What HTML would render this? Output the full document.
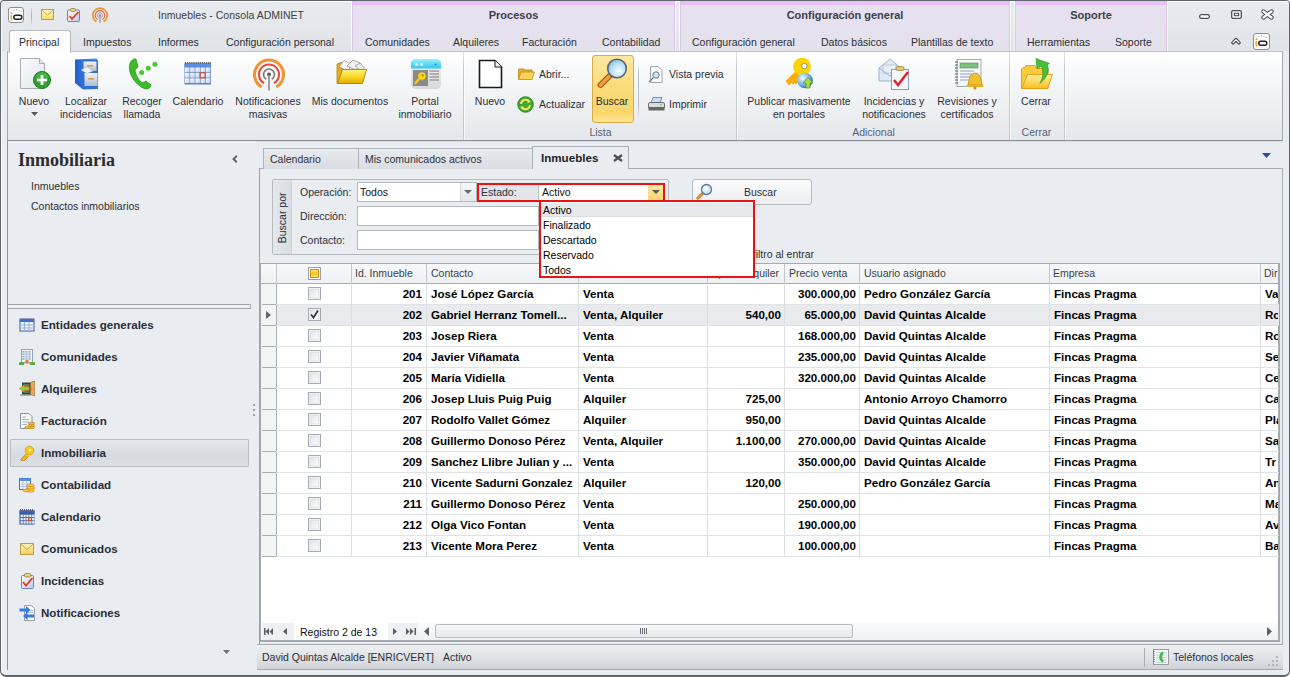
<!DOCTYPE html><html><head><meta charset="utf-8"><style>
*{margin:0;padding:0;box-sizing:border-box}
html,body{width:1290px;height:677px;overflow:hidden;background:#fff}
body{font-family:"Liberation Sans",sans-serif;font-size:11px;color:#1e2b3d;position:relative}
.a{position:absolute}
.t{position:absolute;white-space:nowrap;line-height:1}
</style></head><body>
<div class="a" style="left:0px;top:0px;width:1290px;height:677px;background:#e9ecf0;border:1px solid #60656c;border-bottom-width:2px;border-radius:4px 4px 6px 6px"></div>
<div class="a" style="left:1px;top:6px;width:1px;height:664px;background:#fbfcfd"></div>
<div class="a" style="left:2px;top:1px;width:1287px;height:50px;background:linear-gradient(#e8ebef,#e0e4e9);border-radius:3px 3px 0 0;border-top:1px solid #fff"></div>
<div class="a" style="left:351px;top:1px;width:1px;height:50px;background:linear-gradient(#fff,#f4f5f7)"></div>
<div class="a" style="left:675px;top:1px;width:1px;height:50px;background:linear-gradient(#fff,#f4f5f7)"></div>
<div class="a" style="left:352px;top:1px;width:323px;height:50px;background:linear-gradient(#e8e0f1,#e6e0ef 45%,#e3e2ea);border-top:4px solid #e7c2f9;border-left:1px solid #dcc3ea;border-right:1px solid #dcc3ea"></div>
<div class="t" style="left:363.5px;width:300px;text-align:center;top:9.69px;font-size:11px;color:#3a3e46;font-weight:bold;">Procesos</div>
<div class="a" style="left:679px;top:1px;width:1px;height:50px;background:linear-gradient(#fff,#f4f5f7)"></div>
<div class="a" style="left:1010px;top:1px;width:1px;height:50px;background:linear-gradient(#fff,#f4f5f7)"></div>
<div class="a" style="left:680px;top:1px;width:330px;height:50px;background:linear-gradient(#e8e0f1,#e6e0ef 45%,#e3e2ea);border-top:4px solid #e7c2f9;border-left:1px solid #dcc3ea;border-right:1px solid #dcc3ea"></div>
<div class="t" style="left:695.0px;width:300px;text-align:center;top:9.69px;font-size:11px;color:#3a3e46;font-weight:bold;">Configuración general</div>
<div class="a" style="left:1014px;top:1px;width:1px;height:50px;background:linear-gradient(#fff,#f4f5f7)"></div>
<div class="a" style="left:1167px;top:1px;width:1px;height:50px;background:linear-gradient(#fff,#f4f5f7)"></div>
<div class="a" style="left:1015px;top:1px;width:152px;height:50px;background:linear-gradient(#e8e0f1,#e6e0ef 45%,#e3e2ea);border-top:4px solid #e7c2f9;border-left:1px solid #dcc3ea;border-right:1px solid #dcc3ea"></div>
<div class="t" style="left:941.0px;width:300px;text-align:center;top:9.69px;font-size:11px;color:#3a3e46;font-weight:bold;">Soporte</div>
<div class="t" style="left:158px;top:10.11px;font-size:10.5px;color:#3a3e46;">Inmuebles - Consola ADMINET</div>
<svg class="a" style="left:8px;top:7px" width="16" height="16" viewBox="0 0 16 16"><rect x="0.5" y="0.5" width="15" height="15" rx="2.5" fill="#fbfbfb" stroke="#8b8f95"/><path d="M3.3 8 Q2.5 11 4 13.5" stroke="#f0a020" stroke-width="1.4" fill="none"/><circle cx="3.5" cy="6.3" r="1" fill="#f0a020"/><rect x="5.8" y="8.2" width="8" height="4" rx="2" fill="none" stroke="#222" stroke-width="1.5"/><circle cx="6" cy="3.6" r=".5" fill="#888"/><circle cx="8.5" cy="2.8" r=".5" fill="#888"/><circle cx="11" cy="3.3" r=".5" fill="#888"/><circle cx="13" cy="4.6" r=".5" fill="#888"/></svg>
<div class="a" style="left:31px;top:7px;width:1px;height:18px;background:linear-gradient(#e0e3e7,#a9aeb5,#e0e3e7)"></div>
<svg class="a" style="left:41px;top:9px" width="13" height="11" viewBox="0 0 13 11"><defs><linearGradient id="ml" x1="0" y1="0" x2="0" y2="1"><stop offset="0" stop-color="#fff6c8"/><stop offset="1" stop-color="#f3d870"/></linearGradient></defs><rect x="0.5" y="0.5" width="12" height="10" fill="url(#ml)" stroke="#b8953a" stroke-width=".9"/><path d="M0.5 0.8 L6.5 6 L12.5 0.8" fill="none" stroke="#c9a640" stroke-width=".9"/></svg>
<svg class="a" style="left:67px;top:8px" width="13" height="14" viewBox="0 0 13 14"><defs><linearGradient id="clb" x1="0" y1="0" x2="1" y2="1"><stop offset="0" stop-color="#ffffff"/><stop offset="1" stop-color="#b9c9e6"/></linearGradient></defs><rect x="0.5" y="2" width="12" height="11.5" rx="1" fill="url(#clb)" stroke="#5a7ab0" stroke-width=".9"/><rect x="3.5" y="0.5" width="5" height="3" rx="1" fill="#e6cf7a" stroke="#9c8440" stroke-width=".8"/><path d="M2.5 8 L5 11 L11.5 4" fill="none" stroke="#e23a1a" stroke-width="1.8"/></svg>
<svg class="a" style="left:92px;top:7px" width="17" height="16" viewBox="0 0 17 16"><path d="M4.4 14.64 A7.2 7.2 0 1 1 11.6 14.64" fill="none" stroke="#f3922e" stroke-width="1.8"/><path d="M5.6 12.56 A4.8 4.8 0 1 1 10.4 12.56" fill="none" stroke="#e8604a" stroke-width="1.1"/><path d="M6.75 10.57 A2.5 2.5 0 1 1 9.25 10.57" fill="none" stroke="#9a9a9a" stroke-width="1"/><circle cx="8" cy="8.4" r="1" fill="#666"/><rect x="7.3" y="8.4" width="1.4" height="7.6" fill="#a0a0a0"/></svg>
<svg class="a" style="left:1199px;top:14px" width="11" height="5" viewBox="0 0 11 5"><rect x="0.7" y="0.7" width="9.6" height="3.6" rx="1.5" fill="#fff" stroke="#4a4f57" stroke-width="1.3"/></svg>
<svg class="a" style="left:1231px;top:10px" width="11" height="9" viewBox="0 0 11 9"><rect x="0.7" y="0.7" width="9.6" height="7.6" rx="1.3" fill="#fff" stroke="#4a4f57" stroke-width="1.3"/><rect x="3.3" y="3.3" width="4.4" height="2.4" fill="none" stroke="#4a4f57" stroke-width="1.1"/></svg>
<svg class="a" style="left:1261px;top:9px" width="13" height="11" viewBox="0 0 13 11"><path d="M2.5 2.5 L10.5 8.5 M10.5 2.5 L2.5 8.5" stroke="#4a4f57" stroke-width="4.4" stroke-linecap="round"/><path d="M2.5 2.5 L10.5 8.5 M10.5 2.5 L2.5 8.5" stroke="#fff" stroke-width="2.2" stroke-linecap="round"/></svg>
<svg class="a" style="left:1231px;top:37px" width="10" height="8" viewBox="0 0 10 8"><path d="M2 5.8 L5 2.6 L8 5.8" fill="none" stroke="#333" stroke-width="3.4" stroke-linejoin="round" stroke-linecap="round"/><path d="M2 5.8 L5 2.6 L8 5.8" fill="none" stroke="#fff" stroke-width="1.3" stroke-linecap="round"/></svg>
<svg class="a" style="left:1253px;top:33px" width="17" height="17" viewBox="0 0 17 17"><rect x="0.5" y="0.5" width="16" height="16" rx="2.5" fill="#fbfbfb" stroke="#8b8f95"/><path d="M3.3 8 Q2.5 11 4 13.5" stroke="#f0a020" stroke-width="1.4" fill="none"/><circle cx="3.5" cy="6.3" r="1" fill="#f0a020"/><rect x="5.8" y="8.2" width="8" height="4" rx="2" fill="none" stroke="#222" stroke-width="1.5"/><circle cx="6" cy="3.6" r=".5" fill="#888"/><circle cx="8.5" cy="2.8" r=".5" fill="#888"/><circle cx="11" cy="3.3" r=".5" fill="#888"/><circle cx="13" cy="4.6" r=".5" fill="#888"/></svg>
<div class="a" style="left:7px;top:51px;width:1276px;height:90px;background:linear-gradient(#ffffff,#f5f6f8 35%,#e4e7eb);border:1px solid #a4a9b0;border-top-color:#bfc4ca;border-bottom-color:#8a8f96"></div>
<div class="a" style="left:8px;top:141px;width:1274px;height:2px;background:linear-gradient(#d8dce1,#e9ecf0)"></div>
<div class="a" style="left:9px;top:30px;width:62px;height:23px;background:linear-gradient(#fcfcfd,#fdfdfe);border:1px solid #b3b8bf;border-bottom:none;border-radius:3px 3px 0 0"></div>
<div class="t" style="left:19px;top:37.11px;font-size:10.5px;color:#2b2f38;">Principal</div>
<div class="t" style="left:83px;top:37.11px;font-size:10.5px;color:#2b2f38;">Impuestos</div>
<div class="t" style="left:158px;top:37.11px;font-size:10.5px;color:#2b2f38;">Informes</div>
<div class="t" style="left:226px;top:37.11px;font-size:10.5px;color:#2b2f38;">Configuración personal</div>
<div class="t" style="left:365px;top:37.11px;font-size:10.5px;color:#2b2f38;">Comunidades</div>
<div class="t" style="left:453px;top:37.11px;font-size:10.5px;color:#2b2f38;">Alquileres</div>
<div class="t" style="left:522px;top:37.11px;font-size:10.5px;color:#2b2f38;">Facturación</div>
<div class="t" style="left:602px;top:37.11px;font-size:10.5px;color:#2b2f38;">Contabilidad</div>
<div class="t" style="left:692px;top:37.11px;font-size:10.5px;color:#2b2f38;">Configuración general</div>
<div class="t" style="left:821px;top:37.11px;font-size:10.5px;color:#2b2f38;">Datos básicos</div>
<div class="t" style="left:911px;top:37.11px;font-size:10.5px;color:#2b2f38;">Plantillas de texto</div>
<div class="t" style="left:1027px;top:37.11px;font-size:10.5px;color:#2b2f38;">Herramientas</div>
<div class="t" style="left:1115px;top:37.11px;font-size:10.5px;color:#2b2f38;">Soporte</div>
<div class="a" style="left:463px;top:52px;width:1px;height:88px;background:linear-gradient(#dde0e4,#c6cbd1 20%,#c3c8ce)"></div>
<div class="a" style="left:464px;top:52px;width:1px;height:88px;background:rgba(255,255,255,.7)"></div>
<div class="a" style="left:736px;top:52px;width:1px;height:88px;background:linear-gradient(#dde0e4,#c6cbd1 20%,#c3c8ce)"></div>
<div class="a" style="left:737px;top:52px;width:1px;height:88px;background:rgba(255,255,255,.7)"></div>
<div class="a" style="left:1009px;top:52px;width:1px;height:88px;background:linear-gradient(#dde0e4,#c6cbd1 20%,#c3c8ce)"></div>
<div class="a" style="left:1010px;top:52px;width:1px;height:88px;background:rgba(255,255,255,.7)"></div>
<div class="a" style="left:1064px;top:52px;width:1px;height:88px;background:linear-gradient(#dde0e4,#c6cbd1 20%,#c3c8ce)"></div>
<div class="a" style="left:1065px;top:52px;width:1px;height:88px;background:rgba(255,255,255,.7)"></div>
<div class="a" style="left:638px;top:62px;width:1px;height:56px;background:linear-gradient(rgba(190,195,202,0),#b9bec5 20%,#b9bec5 80%,rgba(190,195,202,0))"></div>
<svg class="a" style="left:20px;top:58px" width="31" height="32" viewBox="0 0 31 32"><defs><linearGradient id="pg" x1="0" y1="0" x2="1" y2="1"><stop offset="0" stop-color="#fafbfd"/><stop offset="1" stop-color="#dfe3ea"/></linearGradient></defs><path d="M0.5 0.5 H19.5 L24.5 5.5 V30.5 H0.5 Z" fill="url(#pg)" stroke="#a9adb4"/><path d="M19.5 0.5 V5.5 H24.5" fill="#e6e8ec" stroke="#a9adb4"/><circle cx="22" cy="22" r="8.5" fill="#2f9e2f" stroke="#1f7a1f"/><circle cx="22" cy="20" r="6" fill="#52c152" opacity=".6"/><path d="M22 17 V27 M17 22 H27" stroke="#fff" stroke-width="2.6"/></svg>
<div class="t" style="left:-116px;width:300px;text-align:center;top:96.11px;font-size:10.5px;color:#2b2f38;">Nuevo</div>
<svg class="a" style="left:31px;top:112px" width="7" height="4" viewBox="0 0 7 4"><path d="M0 0 H7 L3.5 4 Z" fill="#555a62"/></svg>
<svg class="a" style="left:74px;top:58px" width="25" height="32" viewBox="0 0 25 32"><defs><linearGradient id="cab" x1="0" y1="0" x2="1" y2="0"><stop offset="0" stop-color="#1f5fcf"/><stop offset="1" stop-color="#4f95ec"/></linearGradient><linearGradient id="drw" x1="0" y1="0" x2="0" y2="1"><stop offset="0" stop-color="#f4f6fa"/><stop offset="1" stop-color="#aebbd2"/></linearGradient></defs><path d="M1 1.5 L23 0.5 V31 L9 31.5 L1 25 Z" fill="url(#cab)"/><path d="M9 2 H24 V31 H9 Z" fill="#2f6fd8"/><rect x="9.5" y="3.5" width="13" height="9.5" fill="url(#drw)"/><rect x="10.5" y="15" width="13" height="13" fill="url(#drw)"/><rect x="13" y="7" width="6" height="1.8" rx=".8" fill="#d9a04a"/><rect x="14" y="20" width="6" height="1.8" rx=".8" fill="#d9a04a"/><path d="M7 12 L13 9 L19 13 L13 15.5 Z" fill="#eef4fc" stroke="#9fb8d8" stroke-width=".5"/></svg>
<div class="t" style="left:-64px;width:300px;text-align:center;top:96.11px;font-size:10.5px;color:#2b2f38;">Localizar</div>
<div class="t" style="left:-64px;width:300px;text-align:center;top:109.11px;font-size:10.5px;color:#2b2f38;">incidencias</div>
<svg class="a" style="left:128px;top:58px" width="30" height="32" viewBox="0 0 30 32"><path d="M6 1 C1 3 0 10 3 17 C6 24 13 30 18 31 C21 31 23 29 23 27 L18 23 C16 24 15 25 13 24 C10 21 8 17 7 13 C7 11 9 10 10 9 L8 1 Z" fill="#3fba2a" stroke="#2a9a1c" stroke-width=".8"/><circle cx="13.7" cy="14.4" r="2.5" fill="#4cc438"/><circle cx="20.3" cy="10.2" r="2.5" fill="#4cc438"/><circle cx="26.9" cy="6.3" r="2.5" fill="#4cc438"/></svg>
<div class="t" style="left:-8px;width:300px;text-align:center;top:96.11px;font-size:10.5px;color:#2b2f38;">Recoger</div>
<div class="t" style="left:-8px;width:300px;text-align:center;top:109.11px;font-size:10.5px;color:#2b2f38;">llamada</div>
<svg class="a" style="left:184px;top:62px" width="28" height="23" viewBox="0 0 28 23"><defs><linearGradient id="cel" x1="0" y1="0" x2="1" y2="1"><stop offset="0" stop-color="#ffffff"/><stop offset="1" stop-color="#b8cdf0"/></linearGradient></defs><rect x="0.5" y="1.5" width="26.5" height="21" fill="#5a7fb8"/><rect x="0.5" y="1.5" width="26.5" height="3.5" fill="#5b8ee0"/><rect x="1.0" y="5.5" width="4.6" height="4.8" fill="url(#cel)"/><rect x="6.2" y="5.5" width="4.6" height="4.8" fill="url(#cel)"/><rect x="11.4" y="5.5" width="4.6" height="4.8" fill="url(#cel)"/><rect x="16.6" y="5.5" width="4.6" height="4.8" fill="url(#cel)"/><rect x="21.8" y="5.5" width="4.6" height="4.8" fill="url(#cel)"/><rect x="1.0" y="10.9" width="4.6" height="4.8" fill="url(#cel)"/><rect x="6.2" y="10.9" width="4.6" height="4.8" fill="url(#cel)"/><rect x="11.4" y="10.9" width="4.6" height="4.8" fill="url(#cel)"/><rect x="16.6" y="10.9" width="4.6" height="4.8" fill="url(#cel)"/><rect x="21.8" y="10.9" width="4.6" height="4.8" fill="url(#cel)"/><rect x="1.0" y="16.3" width="4.6" height="4.8" fill="url(#cel)"/><rect x="6.2" y="16.3" width="4.6" height="4.8" fill="url(#cel)"/><rect x="11.4" y="16.3" width="4.6" height="4.8" fill="url(#cel)"/><rect x="16.6" y="16.3" width="4.6" height="4.8" fill="url(#cel)"/><rect x="21.8" y="16.3" width="4.6" height="4.8" fill="url(#cel)"/><path d="M1 0.8 H27" stroke="#222" stroke-width="1.2" stroke-dasharray="1.2 0.9"/><rect x="16" y="10.8" width="5.2" height="5" fill="none" stroke="#e0401a" stroke-width="1.1"/></svg>
<div class="t" style="left:48px;width:300px;text-align:center;top:96.11px;font-size:10.5px;color:#2b2f38;">Calendario</div>
<svg class="a" style="left:252px;top:58px" width="34" height="33" viewBox="0 0 34 33"><path d="M9.75 29.06 A14.5 14.5 0 1 1 24.25 29.06" fill="none" stroke="#f3922e" stroke-width="3"/><path d="M12 25.16 A10 10 0 1 1 22 25.16" fill="none" stroke="#e5483a" stroke-width="2"/><path d="M14.25 21.26 A5.5 5.5 0 1 1 19.75 21.26" fill="none" stroke="#7a7a7a" stroke-width="1.6"/><circle cx="17" cy="16.5" r="1.9" fill="#555"/><rect x="16.2" y="16.5" width="1.6" height="16" fill="#8a8a8a"/></svg>
<div class="t" style="left:118px;width:300px;text-align:center;top:96.11px;font-size:10.5px;color:#2b2f38;">Notificaciones</div>
<div class="t" style="left:118px;width:300px;text-align:center;top:109.11px;font-size:10.5px;color:#2b2f38;">masivas</div>
<svg class="a" style="left:336px;top:59px" width="31" height="26" viewBox="0 0 31 26"><defs><linearGradient id="mdf" x1="0" y1="0" x2="0" y2="1"><stop offset="0" stop-color="#fff27a"/><stop offset=".6" stop-color="#f6d21a"/><stop offset="1" stop-color="#e2a800"/></linearGradient></defs><path d="M1 5 L6 3 V24.5 H1 Z" fill="#e6ac1a" stroke="#b8800a" stroke-width=".8"/><path d="M3 8 L8 1.5 L16 5.5 L12 12 Z" fill="#f6f6f6" stroke="#8a8a8a" stroke-width=".7"/><path d="M11 7 L17 1 L25 4.5 L20 11 Z" fill="#f0f0f0" stroke="#8a8a8a" stroke-width=".7"/><path d="M19 7 L24 4 L28.5 9 L25 12 Z" fill="#ececec" stroke="#8a8a8a" stroke-width=".7"/><path d="M6.5 10.5 H30.5 L26.5 24.5 H1.5 Z" fill="url(#mdf)" stroke="#b87c08" stroke-width=".9"/></svg>
<div class="t" style="left:200px;width:300px;text-align:center;top:96.11px;font-size:10.5px;color:#2b2f38;">Mis documentos</div>
<svg class="a" style="left:411px;top:59px" width="30" height="30" viewBox="0 0 30 30"><defs><linearGradient id="ptb" x1="0" y1="0" x2="0" y2="1"><stop offset="0" stop-color="#9af0fc"/><stop offset="1" stop-color="#2ec8f0"/></linearGradient><linearGradient id="ptg" x1="0" y1="0" x2="0" y2="1"><stop offset="0" stop-color="#f2f2f2"/><stop offset="1" stop-color="#d8d8d8"/></linearGradient></defs><rect x="0" y="0" width="30" height="30" rx="4.5" fill="url(#ptg)"/><path d="M0 4.5 A4.5 4.5 0 0 1 4.5 0 H25.5 A4.5 4.5 0 0 1 30 4.5 V9.5 H0 Z" fill="url(#ptb)"/><circle cx="5.5" cy="5.5" r="1.3" fill="#fff"/><circle cx="10.5" cy="5.5" r="1.3" fill="#fff"/><circle cx="24.5" cy="5.5" r="1.1" fill="#1a98c8"/><rect x="2" y="11" width="15" height="16" fill="#8a8a8a"/><path d="M9.5 18.5 L4.5 24" stroke="#f5c511" stroke-width="2.6" stroke-linecap="round"/><circle cx="11" cy="17" r="3.8" fill="#fad40a"/><circle cx="11.8" cy="16.3" r="1.1" fill="#8a8a8a"/><path d="M18.5 12 H28 M18.5 15 H28 M18.5 18 H28 M18.5 21 H28" stroke="#7a7a7a" stroke-width="1"/></svg>
<div class="t" style="left:275px;width:300px;text-align:center;top:96.11px;font-size:10.5px;color:#2b2f38;">Portal</div>
<div class="t" style="left:275px;width:300px;text-align:center;top:109.11px;font-size:10.5px;color:#2b2f38;">inmobiliario</div>
<svg class="a" style="left:478px;top:59px" width="25" height="30" viewBox="0 0 25 30"><path d="M1.5 1.5 H17 L23.5 8 V28.5 H1.5 Z" fill="#fff" stroke="#1a1a1a" stroke-width="1.6"/><path d="M17 1.5 V8 H23.5" fill="#f4f4f4" stroke="#1a1a1a" stroke-width="1"/></svg>
<div class="t" style="left:340px;width:300px;text-align:center;top:96.11px;font-size:10.5px;color:#2b2f38;">Nuevo</div>
<svg class="a" style="left:518px;top:67px" width="17" height="13" viewBox="0 0 17 13"><path d="M0.5 2 H6 L7 3 H14 V12 H0.5 Z" fill="#e2ae2c" stroke="#b78318" stroke-width=".8"/><path d="M3 5 H16.5 L14 12.5 H0.5 Z" fill="#f8d355" stroke="#c58f12" stroke-width=".8"/></svg>
<div class="t" style="left:539px;top:69.11px;font-size:10.5px;color:#2b2f38;">Abrir...</div>
<svg class="a" style="left:517px;top:96px" width="17" height="17" viewBox="0 0 17 17"><circle cx="8.5" cy="8.5" r="7.8" fill="#3aaa2a" stroke="#237a18" stroke-width=".8"/><path d="M4 8 A4.5 4.5 0 0 1 12 5.5" fill="none" stroke="#f4e36a" stroke-width="2"/><path d="M13 9 A4.5 4.5 0 0 1 5 11.5" fill="none" stroke="#f4e36a" stroke-width="2"/><path d="M11 3 L14 6 L10.5 7 Z M6 14 L3 11 L6.5 10 Z" fill="#f4e36a"/></svg>
<div class="t" style="left:539px;top:99.11px;font-size:10.5px;color:#2b2f38;">Actualizar</div>
<div class="a" style="left:592px;top:55px;width:42px;height:68px;background:linear-gradient(#fde7a0,#fcdb7c 45%,#fad66c 85%,#fde690);border:1px solid #d8ab48;border-radius:3px"></div>
<svg class="a" style="left:597px;top:58px" width="31" height="31" viewBox="0 0 31 31"><defs><radialGradient id="lns" cx=".6" cy=".65" r=".7"><stop offset="0" stop-color="#f4fbff"/><stop offset=".6" stop-color="#b9def6"/><stop offset="1" stop-color="#7fb6e0"/></radialGradient></defs><path d="M3.5 27 L12 18.5" stroke="#9a5a18" stroke-width="6" stroke-linecap="round"/><path d="M3.5 27 L12 18.5" stroke="#f59a38" stroke-width="3.8" stroke-linecap="round"/><circle cx="20" cy="10.5" r="9.3" fill="url(#lns)" stroke="#586878" stroke-width="1.6"/></svg>
<div class="t" style="left:462px;width:300px;text-align:center;top:96.11px;font-size:10.5px;color:#2b2f38;">Buscar</div>
<div class="t" style="left:450.5px;width:300px;text-align:center;top:127.11px;font-size:10.5px;color:#56627a;">Lista</div>
<svg class="a" style="left:648px;top:66px" width="15" height="17" viewBox="0 0 15 17"><path d="M2.5 0.5 H10 L14 4.5 V16.5 H2.5 Z" fill="#fbfbfb" stroke="#8a8f96" stroke-width=".8"/><circle cx="8" cy="9" r="3.2" fill="#cfe4f3" stroke="#6a7d90" stroke-width="1"/><path d="M5.5 11.5 L1 16" stroke="#6a7d90" stroke-width="1.3"/></svg>
<div class="t" style="left:669px;top:69.11px;font-size:10.5px;color:#2b2f38;">Vista previa</div>
<svg class="a" style="left:648px;top:97px" width="17" height="14" viewBox="0 0 17 14"><path d="M5 0.5 H14 L12 6 H3 Z" fill="#bfe0f8" stroke="#5f7fa0" stroke-width=".8"/><rect x="0.5" y="5.5" width="16" height="6" rx="1.5" fill="#dcdcdc" stroke="#555" stroke-width=".8"/><rect x="0.5" y="10" width="16" height="3.5" fill="#666"/><circle cx="13" cy="8" r=".8" fill="#3c3"/></svg>
<div class="t" style="left:669px;top:99.11px;font-size:10.5px;color:#2b2f38;">Imprimir</div>
<svg class="a" style="left:784px;top:58px" width="30" height="32" viewBox="0 0 30 32"><defs><radialGradient id="glb" cx=".35" cy=".35" r=".7"><stop offset="0" stop-color="#f0f7ff"/><stop offset=".5" stop-color="#8fc0f0"/><stop offset="1" stop-color="#2a6ad0"/></radialGradient></defs><path d="M13 12 L1.5 23 L5 27.5 L7.5 25 L9 26.5 L10.5 25 L12 26.5 L20 18 Z" fill="#f7ae0a"/><circle cx="18" cy="8.7" r="9" fill="#fad40a"/><circle cx="20.3" cy="8" r="2.7" fill="#fff" stroke="#6a5a20" stroke-width=".6"/><circle cx="21" cy="22.5" r="7.8" fill="url(#glb)"/><path d="M22 30 V25 H19 L24 19.5 L29 25 H26 V30 Z" fill="#a6dc4a" stroke="#5a9a1a" stroke-width=".8"/></svg>
<div class="t" style="left:649px;width:300px;text-align:center;top:96.11px;font-size:10.5px;color:#2b2f38;">Publicar masivamente</div>
<div class="t" style="left:649px;width:300px;text-align:center;top:109.11px;font-size:10.5px;color:#2b2f38;">en portales</div>
<svg class="a" style="left:878px;top:58px" width="32" height="32" viewBox="0 0 32 32"><path d="M1 10 L12 1 L23 10 V23 H1 Z" fill="#dceaf7" stroke="#8aa6c2" stroke-width=".8"/><rect x="5" y="7" width="13" height="8" fill="#e9eef2" stroke="#a7b6c4" stroke-width=".6"/><path d="M1 10 L12 18 L23 10" fill="none" stroke="#8aa6c2" stroke-width=".8"/><rect x="13.5" y="11.5" width="17" height="20" fill="#f4f7fc" stroke="#8da0c0" stroke-width="1"/><rect x="18" y="8.5" width="8" height="4" rx="1.5" fill="#e5c77a" stroke="#a08040" stroke-width=".8"/><path d="M16 22 L20 27 L30 14" fill="none" stroke="#dd2222" stroke-width="2.4"/></svg>
<div class="t" style="left:744px;width:300px;text-align:center;top:96.11px;font-size:10.5px;color:#2b2f38;">Incidencias y</div>
<div class="t" style="left:744px;width:300px;text-align:center;top:109.11px;font-size:10.5px;color:#2b2f38;">notificaciones</div>
<svg class="a" style="left:954px;top:59px" width="30" height="31" viewBox="0 0 30 31"><rect x="3" y="0.5" width="24" height="27" fill="#f6f8fa" stroke="#8899aa" stroke-width=".8"/><path d="M1 3 h3 M1 6 h3 M1 9 h3 M1 12 h3 M1 15 h3 M1 18 h3 M1 21 h3 M1 24 h3" stroke="#555" stroke-width=".9"/><rect x="6" y="4" width="18" height="5" fill="#7fc17f" stroke="#4a8a4a" stroke-width=".6"/><path d="M6 12 H20 M6 15 H18 M6 18 H18 M6 21 H17" stroke="#8aa0c0" stroke-width="1"/><path d="M14 26 Q15 20 16 17 Q21 11 26 17 Q27 20 28 26 Z" fill="#f0c030" stroke="#c69010" stroke-width=".8"/><rect x="12.5" y="25.5" width="17" height="2.5" rx="1" fill="#e8b020"/><circle cx="21" cy="29" r="1.5" fill="#c69010"/></svg>
<div class="t" style="left:817px;width:300px;text-align:center;top:96.11px;font-size:10.5px;color:#2b2f38;">Revisiones y</div>
<div class="t" style="left:817px;width:300px;text-align:center;top:109.11px;font-size:10.5px;color:#2b2f38;">certificados</div>
<svg class="a" style="left:1020px;top:58px" width="34" height="32" viewBox="0 0 34 32"><defs><linearGradient id="fld" x1="0" y1="0" x2="0" y2="1"><stop offset="0" stop-color="#fff0a0"/><stop offset="1" stop-color="#f8bf20"/></linearGradient></defs><path d="M1.5 11 L3 9.5 H5 L6 7.5 H15 L16.5 10.5 H28 V30.5 H1.5 Z" fill="#f8cc3a" stroke="#e29a1a" stroke-width=".9"/><path d="M7.5 16.5 H32.5 L27.5 30.5 H2 Z" fill="url(#fld)" stroke="#e49c18" stroke-width=".9"/><path d="M16 0.5 L29.5 5.5 L27.5 6.5 Q31 16 20 25.5 Q25 16 21.5 8.5 L17 10.5 Z" fill="#45c035" stroke="#2a8f20" stroke-width=".6"/></svg>
<div class="t" style="left:886px;width:300px;text-align:center;top:96.11px;font-size:10.5px;color:#2b2f38;">Cerrar</div>
<div class="t" style="left:886.5px;width:300px;text-align:center;top:127.11px;font-size:10.5px;color:#56627a;">Cerrar</div>
<div class="t" style="left:723.5px;width:300px;text-align:center;top:127.11px;font-size:10.5px;color:#56627a;">Adicional</div>
<div class="a" style="left:7px;top:141px;width:249px;height:529px;background:#e9ecf0;border-left:1px solid #8e939a"></div>
<div class="t" style="left:18px;top:150.76px;font-size:18px;color:#2c2c2c;font-weight:bold;font-family:'Liberation Serif',serif;">Inmobiliaria</div>
<svg class="a" style="left:232px;top:155px" width="6" height="8" viewBox="0 0 6 8"><path d="M4.8 0.8 L1.5 4 L4.8 7.2" fill="none" stroke="#5a5f68" stroke-width="1.9"/></svg>
<div class="t" style="left:31px;top:181.11px;font-size:10.5px;color:#2b2f38;">Inmuebles</div>
<div class="t" style="left:31px;top:201.11px;font-size:10.5px;color:#2b2f38;">Contactos inmobiliarios</div>
<div class="a" style="left:8px;top:304px;width:243px;height:5px;background:#eef0f3;border-top:1px solid #9ea3aa;border-bottom:1px solid #9ea3aa;border-right:1px solid #aeb3ba"></div>
<div class="a" style="left:10px;top:439px;width:239px;height:28px;background:linear-gradient(#e6e9ed,#d6dbe1 60%,#dde1e6);border:1px solid #b8bdc4;border-radius:1px"></div>
<div class="t" style="left:41px;top:319.18px;font-size:11.6px;color:#2a2e36;font-weight:bold;">Entidades generales</div>
<div class="t" style="left:41px;top:351.18px;font-size:11.6px;color:#2a2e36;font-weight:bold;">Comunidades</div>
<div class="t" style="left:41px;top:383.18px;font-size:11.6px;color:#2a2e36;font-weight:bold;">Alquileres</div>
<div class="t" style="left:41px;top:415.18px;font-size:11.6px;color:#2a2e36;font-weight:bold;">Facturación</div>
<div class="t" style="left:41px;top:447.18px;font-size:11.6px;color:#2a2e36;font-weight:bold;">Inmobiliaria</div>
<div class="t" style="left:41px;top:479.18px;font-size:11.6px;color:#2a2e36;font-weight:bold;">Contabilidad</div>
<div class="t" style="left:41px;top:511.18px;font-size:11.6px;color:#2a2e36;font-weight:bold;">Calendario</div>
<div class="t" style="left:41px;top:543.18px;font-size:11.6px;color:#2a2e36;font-weight:bold;">Comunicados</div>
<div class="t" style="left:41px;top:575.18px;font-size:11.6px;color:#2a2e36;font-weight:bold;">Incidencias</div>
<div class="t" style="left:41px;top:607.18px;font-size:11.6px;color:#2a2e36;font-weight:bold;">Notificaciones</div>
<svg class="a" style="left:19px;top:317px" width="16" height="16" viewBox="0 0 16 16"><rect x="1" y="2" width="14" height="12" fill="#eef3fb" stroke="#3a5a9a"/><rect x="1" y="2" width="14" height="3" fill="#3f6fd0"/><path d="M5.5 5 V14 M10 5 V14 M1 8 H15 M1 11 H15" stroke="#9ab0d8"/></svg>
<svg class="a" style="left:19px;top:349px" width="16" height="16" viewBox="0 0 16 16"><rect x="2.5" y="0.5" width="11" height="13" fill="#eef2f8" stroke="#8d9bb0" stroke-width=".9"/><rect x="3.5" y="2.0" width="2" height="1.6" fill="#98abc9"/><rect x="6.5" y="2.0" width="2" height="1.6" fill="#98abc9"/><rect x="9.5" y="2.0" width="2" height="1.6" fill="#98abc9"/><rect x="3.5" y="4.4" width="2" height="1.6" fill="#98abc9"/><rect x="6.5" y="4.4" width="2" height="1.6" fill="#98abc9"/><rect x="9.5" y="4.4" width="2" height="1.6" fill="#98abc9"/><rect x="3.5" y="6.8" width="2" height="1.6" fill="#98abc9"/><rect x="6.5" y="6.8" width="2" height="1.6" fill="#98abc9"/><rect x="9.5" y="6.8" width="2" height="1.6" fill="#98abc9"/><rect x="3.5" y="9.2" width="2" height="1.6" fill="#98abc9"/><rect x="6.5" y="9.2" width="2" height="1.6" fill="#98abc9"/><rect x="9.5" y="9.2" width="2" height="1.6" fill="#98abc9"/><rect x="6.5" y="11" width="3" height="3.5" fill="#d9832a"/><ellipse cx="2.5" cy="14.6" rx="3" ry="1.6" fill="#5aa83a"/><ellipse cx="13.5" cy="14.6" rx="3" ry="1.6" fill="#5aa83a"/></svg>
<svg class="a" style="left:19px;top:381px" width="16" height="16" viewBox="0 0 16 16"><rect x="3" y="1.5" width="9" height="12" fill="#3a3f48"/><rect x="4.5" y="3" width="6" height="9" fill="#5a7a5a"/><path d="M11.5 1.5 L16 0 V15 L11.5 13.5 Z" fill="#e6a860" stroke="#a26a2a" stroke-width=".7"/><circle cx="12.8" cy="8" r=".6" fill="#7a4a1a"/><path d="M0.5 7.5 L5 4 V6 H10 V9 H5 V11 Z" fill="#8ed23a" stroke="#f08a1a" stroke-width=".8"/><rect x="1" y="13.5" width="11" height="1" fill="#777"/></svg>
<svg class="a" style="left:19px;top:413px" width="16" height="16" viewBox="0 0 16 16"><path d="M1.5 0.5 H10 L13 3.5 V15.5 H1.5 Z" fill="#f4f6f8" stroke="#7f8a90" stroke-width=".9"/><path d="M3.5 4 H7 M3.5 6.5 H10 M3.5 9 H10 M3.5 11.5 H8" stroke="#a0aab4" stroke-width=".9"/><ellipse cx="12.5" cy="10.5" rx="3.3" ry="1.3" fill="#f3c23a" stroke="#b07a10" stroke-width=".6"/><ellipse cx="12.5" cy="12.5" rx="3.3" ry="1.3" fill="#f3c23a" stroke="#b07a10" stroke-width=".6"/><ellipse cx="12.5" cy="14.5" rx="3.3" ry="1.3" fill="#f3c23a" stroke="#b07a10" stroke-width=".6"/><ellipse cx="8.5" cy="14.5" rx="3" ry="1.2" fill="#f3c23a" stroke="#b07a10" stroke-width=".6"/></svg>
<svg class="a" style="left:19px;top:445px" width="16" height="16" viewBox="0 0 16 16"><circle cx="10.5" cy="5.5" r="4.3" fill="#f7c81a" stroke="#d09a0a" stroke-width=".8"/><circle cx="11" cy="5" r="1.3" fill="#fff6c0"/><path d="M7.5 8.5 L1.5 14.5 L3 16 L4 15 L5 16 L9.5 11.5" fill="#f2b01e" stroke="#d08a0e" stroke-width=".8"/></svg>
<svg class="a" style="left:19px;top:477px" width="16" height="16" viewBox="0 0 16 16"><rect x="0.5" y="1.5" width="11" height="11" fill="#f4f8fd" stroke="#3a78d0" stroke-width="1"/><rect x="0.5" y="1.5" width="11" height="2.5" fill="#5a90e0"/><path d="M4 4 V12 M7.5 4 V12 M1 7 H11 M1 9.5 H11" stroke="#9ab4dc" stroke-width=".7"/><ellipse cx="11.5" cy="8.5" rx="4" ry="1.6" fill="#f8c848" stroke="#d08a10" stroke-width=".7"/><ellipse cx="11.5" cy="11" rx="4" ry="1.6" fill="#f8c848" stroke="#d08a10" stroke-width=".7"/><ellipse cx="11.5" cy="13.5" rx="4" ry="1.6" fill="#f8c848" stroke="#d08a10" stroke-width=".7"/><ellipse cx="7" cy="13.5" rx="3" ry="1.4" fill="#f8c848" stroke="#d08a10" stroke-width=".7"/></svg>
<svg class="a" style="left:19px;top:509px" width="16" height="16" viewBox="0 0 16 16"><rect x="0.5" y="1.5" width="15" height="14" fill="#2a4a8a"/><rect x="0.5" y="1.5" width="15" height="3" fill="#3a64b8"/><rect x="1.5" y="5.5" width="2.3" height="2.6" fill="#e6eefa"/><rect x="4.4" y="5.5" width="2.3" height="2.6" fill="#e6eefa"/><rect x="7.3" y="5.5" width="2.3" height="2.6" fill="#e6eefa"/><rect x="10.2" y="5.5" width="2.3" height="2.6" fill="#e6eefa"/><rect x="13.1" y="5.5" width="2.3" height="2.6" fill="#e6eefa"/><rect x="1.5" y="8.8" width="2.3" height="2.6" fill="#e6eefa"/><rect x="4.4" y="8.8" width="2.3" height="2.6" fill="#e6eefa"/><rect x="7.3" y="8.8" width="2.3" height="2.6" fill="#e6eefa"/><rect x="10.2" y="8.8" width="2.3" height="2.6" fill="#e6eefa"/><rect x="13.1" y="8.8" width="2.3" height="2.6" fill="#e6eefa"/><rect x="1.5" y="12.1" width="2.3" height="2.6" fill="#e6eefa"/><rect x="4.4" y="12.1" width="2.3" height="2.6" fill="#e6eefa"/><rect x="7.3" y="12.1" width="2.3" height="2.6" fill="#e6eefa"/><rect x="10.2" y="12.1" width="2.3" height="2.6" fill="#e6eefa"/><rect x="13.1" y="12.1" width="2.3" height="2.6" fill="#e6eefa"/><path d="M1 0.8 H15" stroke="#222" stroke-dasharray="1 1"/><rect x="9.6" y="8.6" width="2.8" height="2.8" fill="none" stroke="#e0401a" stroke-width="1"/></svg>
<svg class="a" style="left:19px;top:541px" width="16" height="16" viewBox="0 0 16 16"><defs><linearGradient id="nml" x1="0" y1="0" x2="0" y2="1"><stop offset="0" stop-color="#fff4c0"/><stop offset="1" stop-color="#f2d060"/></linearGradient></defs><rect x="1.5" y="2.5" width="13" height="11" fill="url(#nml)" stroke="#b8953a" stroke-width=".9"/><path d="M1.5 2.8 L8 8.5 L14.5 2.8" fill="none" stroke="#c9a640" stroke-width=".9"/></svg>
<svg class="a" style="left:19px;top:573px" width="16" height="16" viewBox="0 0 16 16"><defs><linearGradient id="ncl" x1="0" y1="0" x2="1" y2="1"><stop offset="0" stop-color="#ffffff"/><stop offset="1" stop-color="#b9c9e6"/></linearGradient></defs><rect x="2.5" y="2.5" width="12" height="13" rx="1" fill="url(#ncl)" stroke="#5a7ab0" stroke-width=".9"/><rect x="5.5" y="0.5" width="6" height="3.5" rx="1" fill="#e6cf7a" stroke="#9c8440" stroke-width=".8"/><path d="M4 9 L7 12.5 L13.5 5" fill="none" stroke="#e23a1a" stroke-width="1.8"/></svg>
<svg class="a" style="left:19px;top:605px" width="16" height="16" viewBox="0 0 16 16"><path d="M5.5 0.5 H12.5 L15.5 3.5 V15.5 H5.5 Z" fill="#f6f7f9" stroke="#8a9099" stroke-width=".8"/><path d="M9 5.5 H14 M9 7.5 H14 M9 11 H14" stroke="#9ab4dc" stroke-width=".8"/><path d="M0.5 3.5 H7 V1 L11.5 5 L7 9 V6.5 H0.5 Z" fill="#3a7ae0"/><path d="M15 9.5 H8.5 V7 L4 11 L8.5 15 V12.5 H15 Z" fill="#3a7ae0"/></svg>
<svg class="a" style="left:223px;top:650px" width="7" height="4" viewBox="0 0 7 4"><path d="M0 0 H7 L3.5 4 Z" fill="#6a6f77"/></svg>
<div class="a" style="left:253px;top:404px;width:2px;height:2px;background:#9aa0a8"></div>
<div class="a" style="left:253px;top:409px;width:2px;height:2px;background:#9aa0a8"></div>
<div class="a" style="left:253px;top:414px;width:2px;height:2px;background:#9aa0a8"></div>
<div class="a" style="left:259px;top:168px;width:1024px;height:477px;background:#e9ecf0;border-left:1px solid #9ba0a7;border-top:1px solid #a9aeb5;border-right:1px solid #a9aeb5"></div>
<div class="a" style="left:263px;top:148px;width:96px;height:21px;background:linear-gradient(#e7eaee,#d9dde2);border:1px solid #aeb3ba;border-bottom:none"></div>
<div class="a" style="left:358px;top:148px;width:175px;height:21px;background:linear-gradient(#e7eaee,#d9dde2);border:1px solid #aeb3ba;border-bottom:none"></div>
<div class="a" style="left:532px;top:146px;width:97px;height:23px;background:#e9ecf0;border:1px solid #a9aeb5;border-bottom:none"></div>
<div class="t" style="left:270px;top:154.11px;font-size:10.5px;color:#2b2f38;">Calendario</div>
<div class="t" style="left:365px;top:154.11px;font-size:10.5px;color:#2b2f38;">Mis comunicados activos</div>
<div class="t" style="left:541px;top:152.18px;font-size:11.6px;color:#1e2128;font-weight:bold;">Inmuebles</div>
<svg class="a" style="left:613px;top:154px" width="10" height="8" viewBox="0 0 10 8"><path d="M1 1 L9 7 M9 1 L1 7" stroke="#4a4f57" stroke-width="2.2"/></svg>
<svg class="a" style="left:1262px;top:153px" width="9" height="5" viewBox="0 0 9 5"><path d="M0 0 H9 L4.5 5 Z" fill="#2a4f9a"/></svg>
<div class="a" style="left:272px;top:179px;width:397px;height:76px;background:#e9ecf0;border:1px solid #b5bac1;border-radius:2px"></div>
<div class="a" style="left:273px;top:180px;width:19px;height:74px;background:linear-gradient(90deg,#e4e7eb,#d9dde2);border-right:1px solid #cfd3d9"></div>
<div class="t" style="left:259px;top:215px;width:46px;text-align:center;font-size:10.5px;color:#2b2f38;transform:rotate(-90deg);line-height:1">Buscar por</div>
<div class="t" style="left:300px;top:187.11px;font-size:10.5px;color:#2b2f38;">Operación:</div>
<div class="t" style="left:300px;top:211.11px;font-size:10.5px;color:#2b2f38;">Dirección:</div>
<div class="t" style="left:300px;top:235.11px;font-size:10.5px;color:#2b2f38;">Contacto:</div>
<div class="a" style="left:357px;top:182px;width:120px;height:20px;background:#fff;border:1px solid #b3b8bf"></div>
<div class="a" style="left:460px;top:183px;width:16px;height:18px;background:linear-gradient(#f6f7f9,#e4e7eb);border-left:1px solid #d2d6db"></div>
<svg class="a" style="left:464px;top:190px" width="8" height="4" viewBox="0 0 8 4"><path d="M0 0 H8 L4 4 Z" fill="#666b73"/></svg>
<div class="a" style="left:357px;top:206px;width:182px;height:20px;background:#fff;border:1px solid #b3b8bf"></div>
<div class="a" style="left:357px;top:230px;width:182px;height:20px;background:#fff;border:1px solid #b3b8bf"></div>
<div class="t" style="left:360px;top:187.11px;font-size:10.5px;color:#111;">Todos</div>
<div class="a" style="left:478px;top:184px;width:60px;height:17px;background:#e2e5e9"></div>
<div class="t" style="left:481px;top:187.11px;font-size:10.5px;color:#2b2f38;">Estado:</div>
<div class="a" style="left:538px;top:184px;width:1px;height:17px;background:#b9bec5"></div>
<div class="a" style="left:539px;top:184px;width:110px;height:17px;background:#fff"></div>
<div class="t" style="left:542px;top:187.11px;font-size:10.5px;color:#111;">Activo</div>
<div class="a" style="left:648px;top:184px;width:15px;height:17px;background:linear-gradient(#fde7a0,#f9d46e)"></div>
<svg class="a" style="left:652px;top:190px" width="8" height="4" viewBox="0 0 8 4"><path d="M0 0 H8 L4 4 Z" fill="#555a62"/></svg>
<div class="a" style="left:477px;top:183px;width:188px;height:19px;border:2px solid #ee1111"></div>
<div class="a" style="left:692px;top:179px;width:120px;height:26px;background:linear-gradient(#fbfbfc,#eceef1);border:1px solid #b5bac1;border-radius:3px"></div>
<svg class="a" style="left:696px;top:183px" width="17" height="17" viewBox="0 0 17 17"><path d="M2 15 L6 11" stroke="#c46a14" stroke-width="3" stroke-linecap="round"/><path d="M2 15 L6 11" stroke="#f39a3a" stroke-width="1.6" stroke-linecap="round"/><circle cx="10.5" cy="6.5" r="5" fill="#cfe8f8" stroke="#5b7592" stroke-width="1.3"/><circle cx="9.5" cy="5.5" r="2.5" fill="#eef8fe"/></svg>
<div class="t" style="left:744px;top:187.11px;font-size:10.5px;color:#2b2f38;">Buscar</div>
<div class="t" style="left:414px;width:400px;text-align:right;top:249.11px;font-size:10.5px;color:#2b2f38;">Aplicar filtro al entrar</div>
<div class="a" style="left:260px;top:263px;width:1020px;height:379px;background:#fff;border:1px solid #a4a9b0;border-right:2px solid #a4a9b0;border-bottom:2px solid #a4a9b0"></div>
<div class="a" style="left:261px;top:264px;width:1017px;height:20px;background:linear-gradient(#f7f8fa,#eef0f3);border-bottom:1px solid #a9aeb5"></div>
<div class="a" style="left:261px;top:284px;width:15px;height:273px;background:#f3f4f6"></div>
<div class="a" style="left:277px;top:305px;width:1002px;height:20px;background:#e8eaed"></div>
<div class="a" style="left:276px;top:264px;width:1px;height:20px;background:#c3c7cd"></div>
<div class="a" style="left:276px;top:284px;width:1px;height:273px;background:#a9aeb5"></div>
<div class="a" style="left:351px;top:264px;width:1px;height:20px;background:#c3c7cd"></div>
<div class="a" style="left:351px;top:284px;width:1px;height:273px;background:#dcdfe3"></div>
<div class="a" style="left:426px;top:264px;width:1px;height:20px;background:#c3c7cd"></div>
<div class="a" style="left:426px;top:284px;width:1px;height:273px;background:#dcdfe3"></div>
<div class="a" style="left:578px;top:264px;width:1px;height:20px;background:#c3c7cd"></div>
<div class="a" style="left:578px;top:284px;width:1px;height:273px;background:#dcdfe3"></div>
<div class="a" style="left:707px;top:264px;width:1px;height:20px;background:#c3c7cd"></div>
<div class="a" style="left:707px;top:284px;width:1px;height:273px;background:#dcdfe3"></div>
<div class="a" style="left:784px;top:264px;width:1px;height:20px;background:#c3c7cd"></div>
<div class="a" style="left:784px;top:284px;width:1px;height:273px;background:#dcdfe3"></div>
<div class="a" style="left:859px;top:264px;width:1px;height:20px;background:#c3c7cd"></div>
<div class="a" style="left:859px;top:284px;width:1px;height:273px;background:#dcdfe3"></div>
<div class="a" style="left:1049px;top:264px;width:1px;height:20px;background:#c3c7cd"></div>
<div class="a" style="left:1049px;top:284px;width:1px;height:273px;background:#dcdfe3"></div>
<div class="a" style="left:1260px;top:264px;width:1px;height:20px;background:#c3c7cd"></div>
<div class="a" style="left:1260px;top:284px;width:1px;height:273px;background:#dcdfe3"></div>
<div class="a" style="left:262px;top:304px;width:1017px;height:1px;background:#dfe2e6"></div>
<div class="a" style="left:262px;top:325px;width:1017px;height:1px;background:#dfe2e6"></div>
<div class="a" style="left:262px;top:346px;width:1017px;height:1px;background:#dfe2e6"></div>
<div class="a" style="left:262px;top:367px;width:1017px;height:1px;background:#dfe2e6"></div>
<div class="a" style="left:262px;top:388px;width:1017px;height:1px;background:#dfe2e6"></div>
<div class="a" style="left:262px;top:409px;width:1017px;height:1px;background:#dfe2e6"></div>
<div class="a" style="left:262px;top:430px;width:1017px;height:1px;background:#dfe2e6"></div>
<div class="a" style="left:262px;top:451px;width:1017px;height:1px;background:#dfe2e6"></div>
<div class="a" style="left:262px;top:472px;width:1017px;height:1px;background:#dfe2e6"></div>
<div class="a" style="left:262px;top:493px;width:1017px;height:1px;background:#dfe2e6"></div>
<div class="a" style="left:262px;top:514px;width:1017px;height:1px;background:#dfe2e6"></div>
<div class="a" style="left:262px;top:535px;width:1017px;height:1px;background:#dfe2e6"></div>
<div class="a" style="left:262px;top:556px;width:1017px;height:1px;background:#dfe2e6"></div>
<div class="a" style="left:262px;top:304px;width:14px;height:1px;background:#a9aeb5"></div>
<div class="a" style="left:262px;top:304px;width:14px;height:1px;background:#a9aeb5"></div>
<div class="a" style="left:262px;top:325px;width:14px;height:1px;background:#a9aeb5"></div>
<div class="a" style="left:262px;top:346px;width:14px;height:1px;background:#a9aeb5"></div>
<div class="a" style="left:262px;top:367px;width:14px;height:1px;background:#a9aeb5"></div>
<div class="a" style="left:262px;top:388px;width:14px;height:1px;background:#a9aeb5"></div>
<div class="a" style="left:262px;top:409px;width:14px;height:1px;background:#a9aeb5"></div>
<div class="a" style="left:262px;top:430px;width:14px;height:1px;background:#a9aeb5"></div>
<div class="a" style="left:262px;top:451px;width:14px;height:1px;background:#a9aeb5"></div>
<div class="a" style="left:262px;top:472px;width:14px;height:1px;background:#a9aeb5"></div>
<div class="a" style="left:262px;top:493px;width:14px;height:1px;background:#a9aeb5"></div>
<div class="a" style="left:262px;top:514px;width:14px;height:1px;background:#a9aeb5"></div>
<div class="a" style="left:262px;top:535px;width:14px;height:1px;background:#a9aeb5"></div>
<div class="a" style="left:262px;top:556px;width:14px;height:1px;background:#a9aeb5"></div>
<div class="t" style="left:355px;top:268.11px;font-size:10.5px;color:#3a3f47;">Id. Inmueble</div>
<div class="t" style="left:431px;top:268.11px;font-size:10.5px;color:#3a3f47;">Contacto</div>
<div class="t" style="left:710px;top:268.11px;font-size:10.5px;color:#3a3f47;">Op</div>
<div class="t" style="left:789px;top:268.11px;font-size:10.5px;color:#3a3f47;">Precio venta</div>
<div class="t" style="left:864px;top:268.11px;font-size:10.5px;color:#3a3f47;">Usuario asignado</div>
<div class="t" style="left:1053px;top:268.11px;font-size:10.5px;color:#3a3f47;">Empresa</div>
<div class="t" style="left:1264px;top:268.11px;font-size:10.5px;color:#3a3f47;">Dir</div>
<div class="t" style="left:379px;width:400px;text-align:right;top:268.11px;font-size:10.5px;color:#3a3f47;">Precio alquiler</div>
<svg class="a" style="left:308px;top:267px" width="13" height="13" viewBox="0 0 13 13"><defs><linearGradient id="hcb" x1="0" y1="0" x2="0" y2="1"><stop offset="0" stop-color="#fbe27a"/><stop offset=".5" stop-color="#f8c420"/><stop offset="1" stop-color="#fde468"/></linearGradient></defs><rect x="0.5" y="0.5" width="12" height="12" fill="#fff" stroke="#9aa2ab"/><rect x="2.5" y="2.5" width="8" height="8" fill="url(#hcb)" stroke="#d98a10" stroke-width=".9"/></svg>
<svg class="a" style="left:308px;top:287px" width="13" height="13" viewBox="0 0 13 13"><rect x="0.5" y="0.5" width="12" height="12" fill="#fff" stroke="#a2a9b1"/><rect x="2" y="2" width="9" height="9" fill="url(#cb)" stroke="#c9cdd2" stroke-width=".6"/></svg>
<div class="t" style="left:22px;width:400px;text-align:right;top:288.18px;font-size:11.6px;color:#000;font-weight:bold;">201</div>
<div class="t" style="left:431px;top:288.18px;font-size:11.6px;color:#000;font-weight:bold;">José López García</div>
<div class="t" style="left:583px;top:288.18px;font-size:11.6px;color:#000;font-weight:bold;">Venta</div>
<div class="t" style="left:456px;width:400px;text-align:right;top:288.18px;font-size:11.6px;color:#000;font-weight:bold;">300.000,00</div>
<div class="t" style="left:864px;top:288.18px;font-size:11.6px;color:#000;font-weight:bold;">Pedro González García</div>
<div class="t" style="left:1054px;top:288.18px;font-size:11.6px;color:#000;font-weight:bold;">Fincas Pragma</div>
<div class="t" style="left:1265px;top:288.18px;width:13px;overflow:hidden;font-size:11.6px;font-weight:bold;color:#000">Va</div>
<svg class="a" style="left:308px;top:308px" width="13" height="13" viewBox="0 0 13 13"><rect x="0.5" y="0.5" width="12" height="12" fill="#fff" stroke="#a2a9b1"/><rect x="2" y="2" width="9" height="9" fill="url(#cb)" stroke="#c9cdd2" stroke-width=".6"/><path d="M3 6.5 L5.5 9.5 L10 2.5" fill="none" stroke="#333" stroke-width="1.7"/></svg>
<div class="t" style="left:22px;width:400px;text-align:right;top:309.18px;font-size:11.6px;color:#000;font-weight:bold;">202</div>
<div class="t" style="left:431px;top:309.18px;font-size:11.6px;color:#000;font-weight:bold;">Gabriel Herranz Tomell...</div>
<div class="t" style="left:583px;top:309.18px;font-size:11.6px;color:#000;font-weight:bold;">Venta, Alquiler</div>
<div class="t" style="left:381px;width:400px;text-align:right;top:309.18px;font-size:11.6px;color:#000;font-weight:bold;">540,00</div>
<div class="t" style="left:456px;width:400px;text-align:right;top:309.18px;font-size:11.6px;color:#000;font-weight:bold;">65.000,00</div>
<div class="t" style="left:864px;top:309.18px;font-size:11.6px;color:#000;font-weight:bold;">David Quintas Alcalde</div>
<div class="t" style="left:1054px;top:309.18px;font-size:11.6px;color:#000;font-weight:bold;">Fincas Pragma</div>
<div class="t" style="left:1265px;top:309.18px;width:13px;overflow:hidden;font-size:11.6px;font-weight:bold;color:#000">Ro</div>
<svg class="a" style="left:308px;top:329px" width="13" height="13" viewBox="0 0 13 13"><rect x="0.5" y="0.5" width="12" height="12" fill="#fff" stroke="#a2a9b1"/><rect x="2" y="2" width="9" height="9" fill="url(#cb)" stroke="#c9cdd2" stroke-width=".6"/></svg>
<div class="t" style="left:22px;width:400px;text-align:right;top:330.18px;font-size:11.6px;color:#000;font-weight:bold;">203</div>
<div class="t" style="left:431px;top:330.18px;font-size:11.6px;color:#000;font-weight:bold;">Josep Riera</div>
<div class="t" style="left:583px;top:330.18px;font-size:11.6px;color:#000;font-weight:bold;">Venta</div>
<div class="t" style="left:456px;width:400px;text-align:right;top:330.18px;font-size:11.6px;color:#000;font-weight:bold;">168.000,00</div>
<div class="t" style="left:864px;top:330.18px;font-size:11.6px;color:#000;font-weight:bold;">David Quintas Alcalde</div>
<div class="t" style="left:1054px;top:330.18px;font-size:11.6px;color:#000;font-weight:bold;">Fincas Pragma</div>
<div class="t" style="left:1265px;top:330.18px;width:13px;overflow:hidden;font-size:11.6px;font-weight:bold;color:#000">Ro</div>
<svg class="a" style="left:308px;top:350px" width="13" height="13" viewBox="0 0 13 13"><rect x="0.5" y="0.5" width="12" height="12" fill="#fff" stroke="#a2a9b1"/><rect x="2" y="2" width="9" height="9" fill="url(#cb)" stroke="#c9cdd2" stroke-width=".6"/></svg>
<div class="t" style="left:22px;width:400px;text-align:right;top:351.18px;font-size:11.6px;color:#000;font-weight:bold;">204</div>
<div class="t" style="left:431px;top:351.18px;font-size:11.6px;color:#000;font-weight:bold;">Javier Viñamata</div>
<div class="t" style="left:583px;top:351.18px;font-size:11.6px;color:#000;font-weight:bold;">Venta</div>
<div class="t" style="left:456px;width:400px;text-align:right;top:351.18px;font-size:11.6px;color:#000;font-weight:bold;">235.000,00</div>
<div class="t" style="left:864px;top:351.18px;font-size:11.6px;color:#000;font-weight:bold;">David Quintas Alcalde</div>
<div class="t" style="left:1054px;top:351.18px;font-size:11.6px;color:#000;font-weight:bold;">Fincas Pragma</div>
<div class="t" style="left:1265px;top:351.18px;width:13px;overflow:hidden;font-size:11.6px;font-weight:bold;color:#000">Se</div>
<svg class="a" style="left:308px;top:371px" width="13" height="13" viewBox="0 0 13 13"><rect x="0.5" y="0.5" width="12" height="12" fill="#fff" stroke="#a2a9b1"/><rect x="2" y="2" width="9" height="9" fill="url(#cb)" stroke="#c9cdd2" stroke-width=".6"/></svg>
<div class="t" style="left:22px;width:400px;text-align:right;top:372.18px;font-size:11.6px;color:#000;font-weight:bold;">205</div>
<div class="t" style="left:431px;top:372.18px;font-size:11.6px;color:#000;font-weight:bold;">María Vidiella</div>
<div class="t" style="left:583px;top:372.18px;font-size:11.6px;color:#000;font-weight:bold;">Venta</div>
<div class="t" style="left:456px;width:400px;text-align:right;top:372.18px;font-size:11.6px;color:#000;font-weight:bold;">320.000,00</div>
<div class="t" style="left:864px;top:372.18px;font-size:11.6px;color:#000;font-weight:bold;">David Quintas Alcalde</div>
<div class="t" style="left:1054px;top:372.18px;font-size:11.6px;color:#000;font-weight:bold;">Fincas Pragma</div>
<div class="t" style="left:1265px;top:372.18px;width:13px;overflow:hidden;font-size:11.6px;font-weight:bold;color:#000">Ce</div>
<svg class="a" style="left:308px;top:392px" width="13" height="13" viewBox="0 0 13 13"><rect x="0.5" y="0.5" width="12" height="12" fill="#fff" stroke="#a2a9b1"/><rect x="2" y="2" width="9" height="9" fill="url(#cb)" stroke="#c9cdd2" stroke-width=".6"/></svg>
<div class="t" style="left:22px;width:400px;text-align:right;top:393.18px;font-size:11.6px;color:#000;font-weight:bold;">206</div>
<div class="t" style="left:431px;top:393.18px;font-size:11.6px;color:#000;font-weight:bold;">Josep Lluis Puig Puig</div>
<div class="t" style="left:583px;top:393.18px;font-size:11.6px;color:#000;font-weight:bold;">Alquiler</div>
<div class="t" style="left:381px;width:400px;text-align:right;top:393.18px;font-size:11.6px;color:#000;font-weight:bold;">725,00</div>
<div class="t" style="left:864px;top:393.18px;font-size:11.6px;color:#000;font-weight:bold;">Antonio Arroyo Chamorro</div>
<div class="t" style="left:1054px;top:393.18px;font-size:11.6px;color:#000;font-weight:bold;">Fincas Pragma</div>
<div class="t" style="left:1265px;top:393.18px;width:13px;overflow:hidden;font-size:11.6px;font-weight:bold;color:#000">Ca</div>
<svg class="a" style="left:308px;top:413px" width="13" height="13" viewBox="0 0 13 13"><rect x="0.5" y="0.5" width="12" height="12" fill="#fff" stroke="#a2a9b1"/><rect x="2" y="2" width="9" height="9" fill="url(#cb)" stroke="#c9cdd2" stroke-width=".6"/></svg>
<div class="t" style="left:22px;width:400px;text-align:right;top:414.18px;font-size:11.6px;color:#000;font-weight:bold;">207</div>
<div class="t" style="left:431px;top:414.18px;font-size:11.6px;color:#000;font-weight:bold;">Rodolfo Vallet Gómez</div>
<div class="t" style="left:583px;top:414.18px;font-size:11.6px;color:#000;font-weight:bold;">Alquiler</div>
<div class="t" style="left:381px;width:400px;text-align:right;top:414.18px;font-size:11.6px;color:#000;font-weight:bold;">950,00</div>
<div class="t" style="left:864px;top:414.18px;font-size:11.6px;color:#000;font-weight:bold;">David Quintas Alcalde</div>
<div class="t" style="left:1054px;top:414.18px;font-size:11.6px;color:#000;font-weight:bold;">Fincas Pragma</div>
<div class="t" style="left:1265px;top:414.18px;width:13px;overflow:hidden;font-size:11.6px;font-weight:bold;color:#000">Pla</div>
<svg class="a" style="left:308px;top:434px" width="13" height="13" viewBox="0 0 13 13"><rect x="0.5" y="0.5" width="12" height="12" fill="#fff" stroke="#a2a9b1"/><rect x="2" y="2" width="9" height="9" fill="url(#cb)" stroke="#c9cdd2" stroke-width=".6"/></svg>
<div class="t" style="left:22px;width:400px;text-align:right;top:435.18px;font-size:11.6px;color:#000;font-weight:bold;">208</div>
<div class="t" style="left:431px;top:435.18px;font-size:11.6px;color:#000;font-weight:bold;">Guillermo Donoso Pérez</div>
<div class="t" style="left:583px;top:435.18px;font-size:11.6px;color:#000;font-weight:bold;">Venta, Alquiler</div>
<div class="t" style="left:381px;width:400px;text-align:right;top:435.18px;font-size:11.6px;color:#000;font-weight:bold;">1.100,00</div>
<div class="t" style="left:456px;width:400px;text-align:right;top:435.18px;font-size:11.6px;color:#000;font-weight:bold;">270.000,00</div>
<div class="t" style="left:864px;top:435.18px;font-size:11.6px;color:#000;font-weight:bold;">David Quintas Alcalde</div>
<div class="t" style="left:1054px;top:435.18px;font-size:11.6px;color:#000;font-weight:bold;">Fincas Pragma</div>
<div class="t" style="left:1265px;top:435.18px;width:13px;overflow:hidden;font-size:11.6px;font-weight:bold;color:#000">Sa</div>
<svg class="a" style="left:308px;top:455px" width="13" height="13" viewBox="0 0 13 13"><rect x="0.5" y="0.5" width="12" height="12" fill="#fff" stroke="#a2a9b1"/><rect x="2" y="2" width="9" height="9" fill="url(#cb)" stroke="#c9cdd2" stroke-width=".6"/></svg>
<div class="t" style="left:22px;width:400px;text-align:right;top:456.18px;font-size:11.6px;color:#000;font-weight:bold;">209</div>
<div class="t" style="left:431px;top:456.18px;font-size:11.6px;color:#000;font-weight:bold;">Sanchez Llibre Julian y ...</div>
<div class="t" style="left:583px;top:456.18px;font-size:11.6px;color:#000;font-weight:bold;">Venta</div>
<div class="t" style="left:456px;width:400px;text-align:right;top:456.18px;font-size:11.6px;color:#000;font-weight:bold;">350.000,00</div>
<div class="t" style="left:864px;top:456.18px;font-size:11.6px;color:#000;font-weight:bold;">David Quintas Alcalde</div>
<div class="t" style="left:1054px;top:456.18px;font-size:11.6px;color:#000;font-weight:bold;">Fincas Pragma</div>
<div class="t" style="left:1265px;top:456.18px;width:13px;overflow:hidden;font-size:11.6px;font-weight:bold;color:#000">Tr</div>
<svg class="a" style="left:308px;top:476px" width="13" height="13" viewBox="0 0 13 13"><rect x="0.5" y="0.5" width="12" height="12" fill="#fff" stroke="#a2a9b1"/><rect x="2" y="2" width="9" height="9" fill="url(#cb)" stroke="#c9cdd2" stroke-width=".6"/></svg>
<div class="t" style="left:22px;width:400px;text-align:right;top:477.18px;font-size:11.6px;color:#000;font-weight:bold;">210</div>
<div class="t" style="left:431px;top:477.18px;font-size:11.6px;color:#000;font-weight:bold;">Vicente Sadurni Gonzalez</div>
<div class="t" style="left:583px;top:477.18px;font-size:11.6px;color:#000;font-weight:bold;">Alquiler</div>
<div class="t" style="left:381px;width:400px;text-align:right;top:477.18px;font-size:11.6px;color:#000;font-weight:bold;">120,00</div>
<div class="t" style="left:864px;top:477.18px;font-size:11.6px;color:#000;font-weight:bold;">Pedro González García</div>
<div class="t" style="left:1054px;top:477.18px;font-size:11.6px;color:#000;font-weight:bold;">Fincas Pragma</div>
<div class="t" style="left:1265px;top:477.18px;width:13px;overflow:hidden;font-size:11.6px;font-weight:bold;color:#000">An</div>
<svg class="a" style="left:308px;top:497px" width="13" height="13" viewBox="0 0 13 13"><rect x="0.5" y="0.5" width="12" height="12" fill="#fff" stroke="#a2a9b1"/><rect x="2" y="2" width="9" height="9" fill="url(#cb)" stroke="#c9cdd2" stroke-width=".6"/></svg>
<div class="t" style="left:22px;width:400px;text-align:right;top:498.18px;font-size:11.6px;color:#000;font-weight:bold;">211</div>
<div class="t" style="left:431px;top:498.18px;font-size:11.6px;color:#000;font-weight:bold;">Guillermo Donoso Pérez</div>
<div class="t" style="left:583px;top:498.18px;font-size:11.6px;color:#000;font-weight:bold;">Venta</div>
<div class="t" style="left:456px;width:400px;text-align:right;top:498.18px;font-size:11.6px;color:#000;font-weight:bold;">250.000,00</div>
<div class="t" style="left:1054px;top:498.18px;font-size:11.6px;color:#000;font-weight:bold;">Fincas Pragma</div>
<div class="t" style="left:1265px;top:498.18px;width:13px;overflow:hidden;font-size:11.6px;font-weight:bold;color:#000">Ma</div>
<svg class="a" style="left:308px;top:518px" width="13" height="13" viewBox="0 0 13 13"><rect x="0.5" y="0.5" width="12" height="12" fill="#fff" stroke="#a2a9b1"/><rect x="2" y="2" width="9" height="9" fill="url(#cb)" stroke="#c9cdd2" stroke-width=".6"/></svg>
<div class="t" style="left:22px;width:400px;text-align:right;top:519.18px;font-size:11.6px;color:#000;font-weight:bold;">212</div>
<div class="t" style="left:431px;top:519.18px;font-size:11.6px;color:#000;font-weight:bold;">Olga Vico Fontan</div>
<div class="t" style="left:583px;top:519.18px;font-size:11.6px;color:#000;font-weight:bold;">Venta</div>
<div class="t" style="left:456px;width:400px;text-align:right;top:519.18px;font-size:11.6px;color:#000;font-weight:bold;">190.000,00</div>
<div class="t" style="left:1054px;top:519.18px;font-size:11.6px;color:#000;font-weight:bold;">Fincas Pragma</div>
<div class="t" style="left:1265px;top:519.18px;width:13px;overflow:hidden;font-size:11.6px;font-weight:bold;color:#000">Av</div>
<svg class="a" style="left:308px;top:539px" width="13" height="13" viewBox="0 0 13 13"><rect x="0.5" y="0.5" width="12" height="12" fill="#fff" stroke="#a2a9b1"/><rect x="2" y="2" width="9" height="9" fill="url(#cb)" stroke="#c9cdd2" stroke-width=".6"/></svg>
<div class="t" style="left:22px;width:400px;text-align:right;top:540.18px;font-size:11.6px;color:#000;font-weight:bold;">213</div>
<div class="t" style="left:431px;top:540.18px;font-size:11.6px;color:#000;font-weight:bold;">Vicente Mora Perez</div>
<div class="t" style="left:583px;top:540.18px;font-size:11.6px;color:#000;font-weight:bold;">Venta</div>
<div class="t" style="left:456px;width:400px;text-align:right;top:540.18px;font-size:11.6px;color:#000;font-weight:bold;">100.000,00</div>
<div class="t" style="left:1054px;top:540.18px;font-size:11.6px;color:#000;font-weight:bold;">Fincas Pragma</div>
<div class="t" style="left:1265px;top:540.18px;width:13px;overflow:hidden;font-size:11.6px;font-weight:bold;color:#000">Ba</div>
<svg width="0" height="0" style="position:absolute"><defs><linearGradient id="cb" x1="0" y1="0" x2="1" y2="1"><stop offset="0" stop-color="#e4e6ea"/><stop offset="1" stop-color="#fbfbfc"/></linearGradient></defs></svg>
<svg class="a" style="left:266px;top:311px" width="5" height="8" viewBox="0 0 5 8"><path d="M0 0 L5 4 L0 8 Z" fill="#60656d"/></svg>
<div class="a" style="left:262px;top:623px;width:32px;height:17px;background:#eef0f3"></div>
<div class="a" style="left:388px;top:623px;width:30px;height:17px;background:#eef0f3"></div>
<div class="a" style="left:418px;top:623px;width:860px;height:17px;background:linear-gradient(#fbfbfc,#eef0f2)"></div>
<svg class="a" style="left:264px;top:628px" width="9" height="7" viewBox="0 0 9 7"><path d="M0 0 H1.5 V7 H0 Z M5 0 V7 L1.5 3.5 Z M9 0 V7 L5.5 3.5 Z" fill="#5a5f67"/></svg>
<svg class="a" style="left:283px;top:628px" width="4" height="7" viewBox="0 0 4 7"><path d="M4 0 V7 L0 3.5 Z" fill="#5a5f67"/></svg>
<div class="t" style="left:300px;top:627.11px;font-size:10.5px;color:#111;">Registro 2 de 13</div>
<svg class="a" style="left:393px;top:628px" width="4" height="7" viewBox="0 0 4 7"><path d="M0 0 V7 L4 3.5 Z" fill="#5a5f67"/></svg>
<svg class="a" style="left:406px;top:628px" width="10" height="7" viewBox="0 0 10 7"><path d="M0 0 V7 L3.5 3.5 Z M4 0 V7 L7.5 3.5 Z M8.5 0 H10 V7 H8.5 Z" fill="#5a5f67"/></svg>
<svg class="a" style="left:424px;top:627px" width="5" height="9" viewBox="0 0 5 9"><path d="M5 0 V9 L0 4.5 Z" fill="#5a5f67"/></svg>
<div class="a" style="left:435px;top:624px;width:418px;height:14px;background:linear-gradient(#f7f8f9,#e6e8eb);border:1px solid #b8bcc2;border-radius:2px"></div>
<div class="a" style="left:640px;top:628px;width:1px;height:6px;background:#666b73"></div>
<div class="a" style="left:642px;top:628px;width:1px;height:6px;background:#666b73"></div>
<div class="a" style="left:644px;top:628px;width:1px;height:6px;background:#666b73"></div>
<div class="a" style="left:646px;top:628px;width:1px;height:6px;background:#666b73"></div>
<svg class="a" style="left:1267px;top:627px" width="5" height="9" viewBox="0 0 5 9"><path d="M0 0 V9 L5 4.5 Z" fill="#5a5f67"/></svg>
<div class="a" style="left:257px;top:644px;width:1026px;height:1px;background:#a4a9b0"></div>
<div class="a" style="left:257px;top:645px;width:1026px;height:25px;background:linear-gradient(#eef0f2,#dde0e4 60%,#cfd3d8);border-bottom:1px solid #a4a9b0"></div>
<div class="t" style="left:262px;top:652.11px;font-size:10.5px;color:#2b2f38;">David Quintas Alcalde [ENRICVERT]</div>
<div class="t" style="left:443px;top:652.11px;font-size:10.5px;color:#2b2f38;">Activo</div>
<div class="a" style="left:1144px;top:648px;width:1px;height:19px;background:#a9aeb5"></div>
<svg class="a" style="left:1153px;top:649px" width="16" height="16" viewBox="0 0 16 16"><rect x="0.5" y="0.5" width="15" height="15" fill="#f4f6fa" stroke="#8a929c" stroke-width=".9"/><path d="M3 3.5 H14 M3 6 H14 M3 8.5 H14 M3 11 H14 M3 13.5 H14" stroke="#b8c4d4" stroke-width=".7"/><path d="M1 2 V14" stroke="#555" stroke-width="1" stroke-dasharray="1 1"/><path d="M10 2.5 C5.5 3.5 5 11.5 9.5 13.5 L11 11.5 C9 10.5 8.5 6.5 10.5 5 Z" fill="#3cc03a"/></svg>
<div class="t" style="left:1173px;top:652.11px;font-size:10.5px;color:#2b2f38;">Teléfonos locales</div>
<div class="a" style="left:1276px;top:656px;width:2px;height:2px;background:#b0b5bb"></div>
<div class="a" style="left:1272px;top:660px;width:2px;height:2px;background:#b0b5bb"></div>
<div class="a" style="left:1276px;top:660px;width:2px;height:2px;background:#b0b5bb"></div>
<div class="a" style="left:1268px;top:664px;width:2px;height:2px;background:#b0b5bb"></div>
<div class="a" style="left:1272px;top:664px;width:2px;height:2px;background:#b0b5bb"></div>
<div class="a" style="left:1276px;top:664px;width:2px;height:2px;background:#b0b5bb"></div>
<div class="a" style="left:539px;top:200px;width:216px;height:78px;background:#fff;border:2px solid #ee1111"></div>
<div class="a" style="left:541px;top:203px;width:212px;height:14px;background:#e8e9ec;border-bottom:1px solid #dcdee2"></div>
<div class="t" style="left:543px;top:205.11px;font-size:10.5px;color:#000;">Activo</div>
<div class="t" style="left:543px;top:220.11px;font-size:10.5px;color:#000;">Finalizado</div>
<div class="t" style="left:543px;top:235.11px;font-size:10.5px;color:#000;">Descartado</div>
<div class="t" style="left:543px;top:250.11px;font-size:10.5px;color:#000;">Reservado</div>
<div class="t" style="left:543px;top:265.11px;font-size:10.5px;color:#000;">Todos</div>
</body></html>
